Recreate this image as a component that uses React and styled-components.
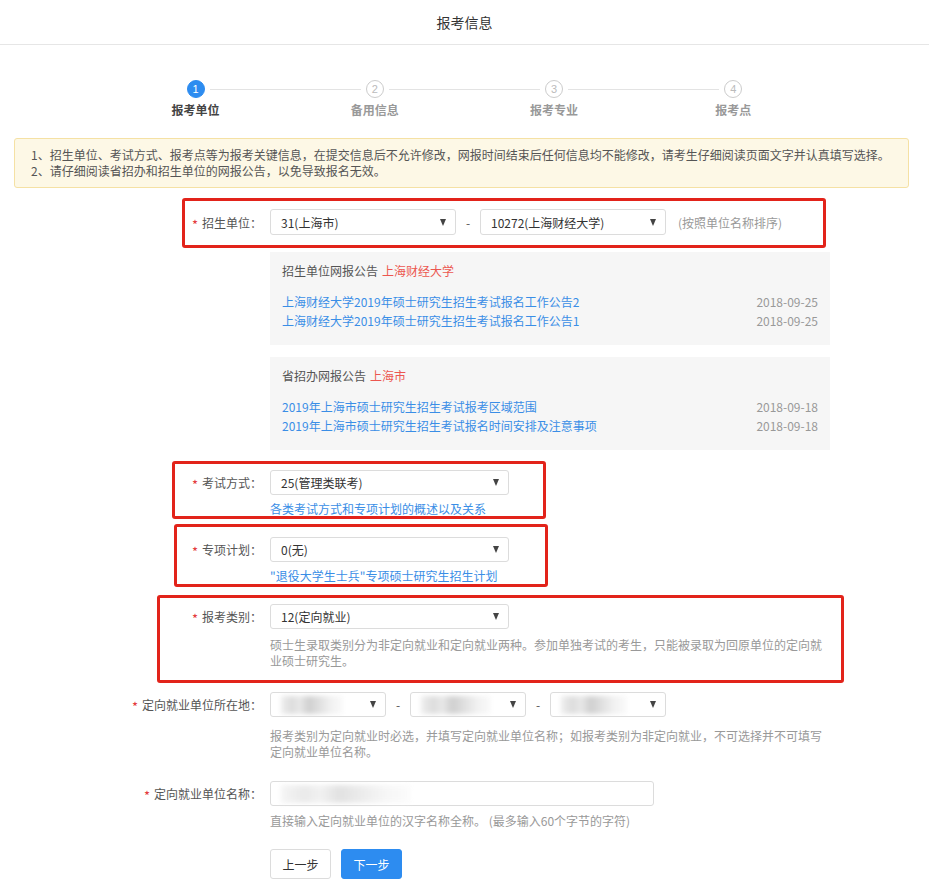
import React from "react";
import styled, { createGlobalStyle } from "styled-components";

const GlobalStyle = createGlobalStyle`
    * { box-sizing: border-box; }
    body {
        margin: 0;
        background: #fff;
        font-family: "Noto Sans CJK SC", "Liberation Sans", sans-serif;
        font-size: 12px;
        color: #333;
    }
`;

const Page = styled.div`
    width: 929px;
    padding-bottom: 14px;
`;

const TopBar = styled.header`
    height: 45px;
    border-bottom: 1px solid #e6e6e6;
    display: flex;
    align-items: center;
    justify-content: center;
    font-size: 14px;
    color: #333;
`;

const Steps = styled.ol`
    list-style: none;
    margin: 35px auto 0;
    padding: 0;
    width: 717px;
    display: grid;
    grid-template-columns: repeat(4, 1fr);
`;

const Step = styled.li`
    position: relative;
    display: flex;
    flex-direction: column;
    align-items: center;

    &:not(:last-child)::after {
        content: "";
        position: absolute;
        top: 9px;
        left: calc(50% + 14px);
        width: calc(100% - 28px);
        height: 1px;
        background: #e3e3e3;
    }
`;

const StepDot = styled.span`
    width: 18px;
    height: 18px;
    border-radius: 50%;
    display: flex;
    align-items: center;
    justify-content: center;
    font-size: 11px;
    line-height: 1;
    font-family: "Liberation Sans", sans-serif;
    background: ${p => (p.$active ? "#2d8cf0" : "#fff")};
    color: ${p => (p.$active ? "#fff" : "#bbb")};
    border: 1px solid ${p => (p.$active ? "#2d8cf0" : "#ccc")};
`;

const StepLabel = styled.span`
    margin-top: 4px;
    line-height: 16px;
    font-weight: 600;
    color: ${p => (p.$active ? "#444" : "#999")};
`;

const Notice = styled.div`
    margin: 20px 20px 0 14px;
    padding: 8px 16px;
    background: #fdf8e6;
    border: 1px solid #f5e1a4;
    border-radius: 3px;
    line-height: 16px;
    color: #555;
`;

// red annotation frame drawn over a form row
const Highlight = styled.div`
    position: relative;

    &::after {
        content: "";
        position: absolute;
        left: ${p => p.$left}px;
        width: ${p => p.$width}px;
        top: ${p => p.$top}px;
        bottom: ${p => p.$bottom}px;
        border: 3px solid #e2231a;
        border-radius: 3px;
        pointer-events: none;
    }
`;

const FormRow = styled.div`
    display: grid;
    grid-template-columns: 262px 560px;
    column-gap: 8px;
    align-items: start;
    margin-top: ${p => p.$mt || 0}px;
`;

const Label = styled.label`
    height: ${p => p.$h || 25}px;
    display: flex;
    align-items: center;
    justify-content: flex-end;
    color: #555;
    white-space: nowrap;

    &::before {
        content: "*";
        color: #e4393c;
        margin-right: 4px;
        font-size: 13px;
        position: relative;
        top: 2px;
    }
`;

const Controls = styled.div`
    display: flex;
    align-items: center;
`;

const Select = styled.div`
    width: ${p => p.$width}px;
    height: ${p => p.$h || 25}px;
    border: 1px solid #dcdcdc;
    border-radius: 3px;
    background: #fff;
    display: flex;
    align-items: center;
    justify-content: space-between;
    padding: 0 9px 0 10px;
    color: #333;
    overflow: hidden;
`;

const Caret = styled.span`
    width: 0;
    height: 0;
    border-left: 3.5px solid transparent;
    border-right: 3.5px solid transparent;
    border-top: 7px solid #444;
    flex: none;
`;

const Dash = styled.span`
    width: 24px;
    text-align: center;
    color: #555;
`;

const SideNote = styled.span`
    margin-left: 12px;
    color: #999;
`;

const Blurred = styled.span`
    display: block;
    width: ${p => p.$width}px;
    height: 18px;
    background: linear-gradient(
        90deg,
        #eeeeee 0%,
        #dcdcdc 18%,
        #e9e9e9 30%,
        #cfcfcf 45%,
        #dedede 60%,
        #f1f1f1 80%,
        #fafafa 100%
    );
    filter: blur(2.5px);
    opacity: ${p => (p.$faint ? 0.6 : 1)};
`;

const Help = styled.div`
    grid-column: 2;
    margin-top: ${p => p.$gap}px;
    line-height: 16px;
    max-width: 556px;
    color: ${p => (p.$link ? "#3a8ee6" : "#999")};
`;

const Indent = styled.div`
    margin: ${p => p.$mt}px 0 0 270px;
    width: 560px;
`;

const Board = styled.section`
    background: #f6f6f6;
    padding: 11px 12px 15px;
`;

const BoardTitle = styled.div`
    line-height: 16px;
    color: #555;
    margin-bottom: 13px;

    em {
        font-style: normal;
        color: #ec5650;
        margin-left: 4px;
    }
`;

const NewsRow = styled.div`
    display: flex;
    justify-content: space-between;
    line-height: 19px;
`;

const NewsLink = styled.a`
    color: #3a8ee6;
    text-decoration: none;
`;

const NewsDate = styled.span`
    color: #999;
`;

const TextInput = styled.div`
    width: 384px;
    height: 25px;
    border: 1px solid #dcdcdc;
    border-radius: 3px;
    display: flex;
    align-items: center;
    padding-left: 10px;
`;

const Buttons = styled.div`
    display: flex;
    gap: 10px;
    margin: 20px 0 0 270px;
`;

const Button = styled.button`
    width: 61px;
    height: 30px;
    border-radius: 3px;
    font-family: inherit;
    font-size: 12px;
    cursor: pointer;
    border: 1px solid ${p => (p.$primary ? "#2d8cf0" : "#dcdcdc")};
    background: ${p => (p.$primary ? "#2d8cf0" : "#fff")};
    color: ${p => (p.$primary ? "#fff" : "#333")};
`;

const steps = ["报考单位", "备用信息", "报考专业", "报考点"];

const boards = [
    {
        title: "招生单位网报公告",
        tag: "上海财经大学",
        items: [
            ["上海财经大学2019年硕士研究生招生考试报名工作公告2", "2018-09-25"],
            ["上海财经大学2019年硕士研究生招生考试报名工作公告1", "2018-09-25"],
        ],
    },
    {
        title: "省招办网报公告",
        tag: "上海市",
        items: [
            ["2019年上海市硕士研究生招生考试报考区域范围", "2018-09-18"],
            ["2019年上海市硕士研究生招生考试报名时间安排及注意事项", "2018-09-18"],
        ],
    },
];

export default function App() {
    return (
        <Page>
            <GlobalStyle />
            <TopBar>报考信息</TopBar>

            <Steps>
                {steps.map((name, i) => (
                    <Step key={name}>
                        <StepDot $active={i === 0}>{i + 1}</StepDot>
                        <StepLabel $active={i === 0}>{name}</StepLabel>
                    </Step>
                ))}
            </Steps>

            <Notice>
                1、招生单位、考试方式、报考点等为报考关键信息，在提交信息后不允许修改，网报时间结束后任何信息均不能修改，请考生仔细阅读页面文字并认真填写选择。
                <br />
                2、请仔细阅读省招办和招生单位的网报公告，以免导致报名无效。
            </Notice>

            <Highlight $left={182} $width={638} $top={-11} $bottom={-13}>
                <FormRow $mt={21}>
                    <Label $h={26}>招生单位：</Label>
                    <Controls>
                        <Select $width={186} $h={26}>31(上海市)<Caret /></Select>
                        <Dash>-</Dash>
                        <Select $width={186} $h={26}>10272(上海财经大学)<Caret /></Select>
                        <SideNote>(按照单位名称排序)</SideNote>
                    </Controls>
                </FormRow>
            </Highlight>

            {boards.map((b, i) => (
                <Indent key={b.title} $mt={i === 0 ? 17 : 12}>
                    <Board>
                        <BoardTitle>
                            {b.title}<em>{b.tag}</em>
                        </BoardTitle>
                        {b.items.map(([text, date]) => (
                            <NewsRow key={text}>
                                <NewsLink href="#">{text}</NewsLink>
                                <NewsDate>{date}</NewsDate>
                            </NewsRow>
                        ))}
                    </Board>
                </Indent>
            ))}

            <Highlight $left={172} $width={368} $top={-9} $bottom={-2}>
                <FormRow $mt={20}>
                    <Label>考试方式：</Label>
                    <Select $width={239}>25(管理类联考)<Caret /></Select>
                    <Help $link $gap={6}>各类考试方式和专项计划的概述以及关系</Help>
                </FormRow>
            </Highlight>

            <Highlight $left={174} $width={368} $top={-13} $bottom={-3}>
                <FormRow $mt={20}>
                    <Label>专项计划：</Label>
                    <Select $width={239}>0(无)<Caret /></Select>
                    <Help $link $gap={6}>"退役大学生士兵"专项硕士研究生招生计划</Help>
                </FormRow>
            </Highlight>

            <Highlight $left={157} $width={681} $top={-9} $bottom={-14}>
                <FormRow $mt={20}>
                    <Label>报考类别：</Label>
                    <Select $width={239}>12(定向就业)<Caret /></Select>
                    <Help $gap={8}>
                        硕士生录取类别分为非定向就业和定向就业两种。参加单独考试的考生，只能被录取为回原单位的定向就业硕士研究生。
                    </Help>
                </FormRow>
            </Highlight>

            <FormRow $mt={23}>
                <Label>定向就业单位所在地：</Label>
                <Controls>
                    <Select $width={116}><Blurred $width={62} /><Caret /></Select>
                    <Dash>-</Dash>
                    <Select $width={116}><Blurred $width={70} /><Caret /></Select>
                    <Dash>-</Dash>
                    <Select $width={116}><Blurred $width={66} /><Caret /></Select>
                </Controls>
                <Help $gap={11}>
                    报考类别为定向就业时必选，并填写定向就业单位名称；如报考类别为非定向就业，不可选择并不可填写定向就业单位名称。
                </Help>
            </FormRow>

            <FormRow $mt={21}>
                <Label>定向就业单位名称：</Label>
                <TextInput><Blurred $width={130} $faint /></TextInput>
                <Help $gap={7}>直接输入定向就业单位的汉字名称全称。 (最多输入60个字节的字符)</Help>
            </FormRow>

            <Buttons>
                <Button>上一步</Button>
                <Button $primary>下一步</Button>
            </Buttons>
        </Page>
    );
}
